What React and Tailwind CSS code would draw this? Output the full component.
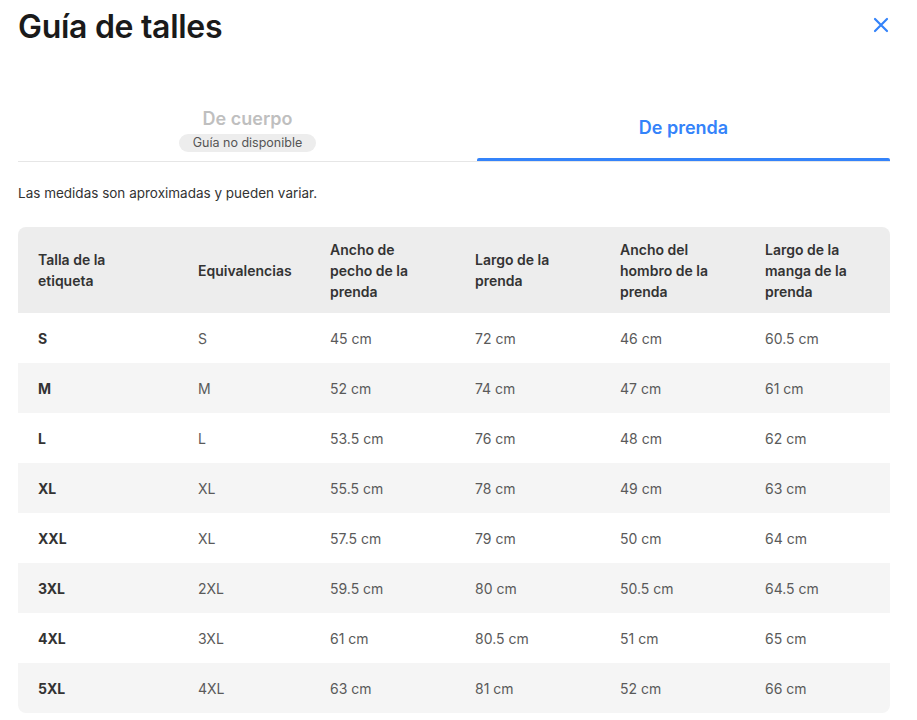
const ROWS = [
  ['S', 'S', '45 cm', '72 cm', '46 cm', '60.5 cm'],
  ['M', 'M', '52 cm', '74 cm', '47 cm', '61 cm'],
  ['L', 'L', '53.5 cm', '76 cm', '48 cm', '62 cm'],
  ['XL', 'XL', '55.5 cm', '78 cm', '49 cm', '63 cm'],
  ['XXL', 'XL', '57.5 cm', '79 cm', '50 cm', '64 cm'],
  ['3XL', '2XL', '59.5 cm', '80 cm', '50.5 cm', '64.5 cm'],
  ['4XL', '3XL', '61 cm', '80.5 cm', '51 cm', '65 cm'],
  ['5XL', '4XL', '63 cm', '81 cm', '52 cm', '66 cm'],
]

const HEAD = [
  'Talla de la etiqueta',
  'Equivalencias',
  'Ancho de pecho de la prenda',
  'Largo de la prenda',
  'Ancho del hombro de la prenda',
  'Largo de la manga de la prenda',
]

const COLS = 'grid grid-cols-[160px_132px_145px_145px_145px_1fr]'

export default function App() {
  return (
    <div className="min-h-screen bg-white pl-[18px] pr-[27px] pt-[8px] text-[#333] font-['Inter',sans-serif]">
      {/* Cabecera */}
      <div className="flex items-start justify-between">
        <h1 className="text-[32px] font-semibold leading-[38px] tracking-[-0.3px] text-[#1a1a1a]">Guía de talles</h1>
        <button className="mt-[9px] mr-[1px] text-[#3483fa]">
          <svg viewBox="0 0 16 16" className="h-[16px] w-[16px] fill-none stroke-current" strokeWidth="2.2" strokeLinecap="round">
            <path d="M2 2l12 12M14 2L2 14" />
          </svg>
        </button>
      </div>

      {/* Onglets */}
      <div className="mt-[57px] flex border-b border-[#e6e6e6]">
        <div className="flex h-[58px] w-[459px] flex-col items-center">
          <span className="mt-[4px] text-[18px] font-semibold leading-[24px] text-[#bfbfbf]">De cuerpo</span>
          <span className="mt-[3px] rounded-full bg-[#ededed] px-[14px] text-[12.5px] leading-[18px] text-[#555]">Guía no disponible</span>
        </div>
        <div className="flex flex-1 flex-col items-center">
          <span className="mt-[13px] flex-1 text-[18px] font-semibold leading-[24px] text-[#3483fa]">De prenda</span>
          <div className="h-[3px] w-full rounded-t-[2px] bg-[#3483fa]" />
        </div>
      </div>

      <p className="mt-[22px] text-[13.5px] leading-[18px] text-[#333]">Las medidas son aproximadas y pueden variar.</p>

      {/* Tableau */}
      <div className="mt-[25px] overflow-hidden rounded-[8px]">
        <div className={`${COLS} h-[86px] items-center bg-[#ededed] text-[14px] font-semibold leading-[21px] text-[#333]`}>
          {HEAD.map((h) => (
            <div key={h} className="pl-[20px] pr-[16px] first:pr-[40px]">{h}</div>
          ))}
        </div>
        {ROWS.map((r, i) => (
          <div key={r[0]} className={`${COLS} h-[50px] items-center text-[14px] ${i % 2 ? 'bg-[#f5f5f5]' : 'bg-white'}`}>
            {r.map((c, j) => (
              <div key={j} className={j === 0 ? 'pl-[20px] font-bold text-[#333]' : 'pl-[20px] text-[#5a5a5a]'}>{c}</div>
            ))}
          </div>
        ))}
      </div>
    </div>
  )
}
